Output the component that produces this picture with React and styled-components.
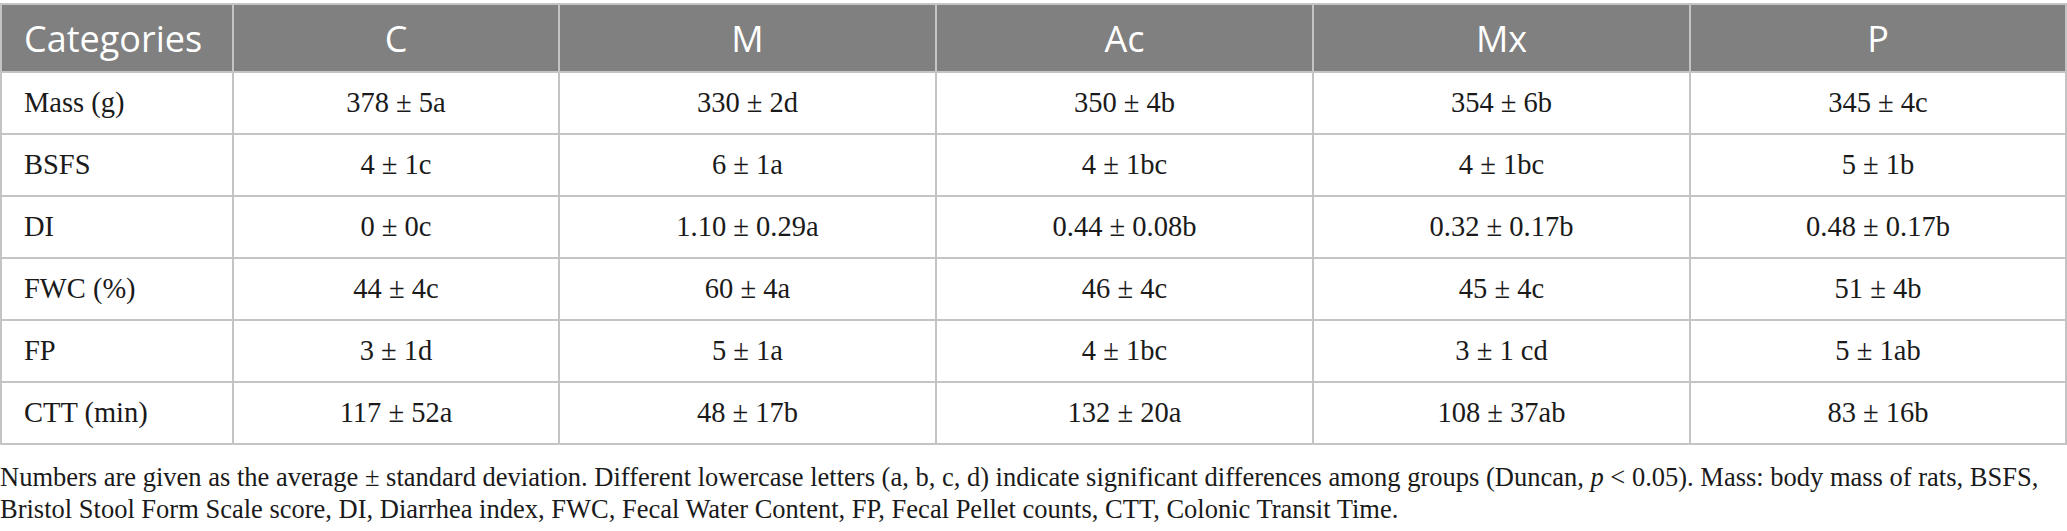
import React from 'react'
import styled, { createGlobalStyle } from 'styled-components'

const GlobalStyle = createGlobalStyle`
  html, body {
    margin: 0;
    padding: 0;
    background: #ffffff;
  }
`

const Wrapper = styled.div`
  width: 2067px;
  padding-top: 3px;
  color: #1a1a1a;
  font-family: "Liberation Serif", "Times New Roman", serif;
`

const Table = styled.table`
  width: 100%;
  border-collapse: collapse;
  table-layout: fixed;
  border: 2px solid #c4c4c4;
`

const Col = styled.col`
  width: ${props => (props.w ? `${props.w}px` : 'auto')};
`

const HeadCell = styled.th`
  height: 66px;
  padding: 0 ${props => (props.first ? '22px' : '0')};
  background: #808080;
  color: #ffffff;
  font-family: "Open Sans", "Noto Sans", sans-serif;
  font-weight: 400;
  font-size: 36px;
  text-align: ${props => (props.first ? 'left' : 'center')};
  border: 2px solid #c4c4c4;
  border-top: 0;
  border-bottom: 0;
`

const Cell = styled.td`
  height: 60px;
  padding: 0 ${props => (props.first ? '22px' : '0')};
  font-size: 28.5px;
  text-align: ${props => (props.first ? 'left' : 'center')};
  border: 2px solid #c4c4c4;
`

const Note = styled.p`
  margin: 16px 0 0;
  font-size: 26.5px;
  line-height: 32px;
`

const Italic = styled.i`
  font-style: italic;
`

const widths = [232, 326, 377, 377, 377, 0]

const columns = ['C', 'M', 'Ac', 'Mx', 'P']

const rows = [
  ['Mass (g)', '378 ± 5a', '330 ± 2d', '350 ± 4b', '354 ± 6b', '345 ± 4c'],
  ['BSFS', '4 ± 1c', '6 ± 1a', '4 ± 1bc', '4 ± 1bc', '5 ± 1b'],
  ['DI', '0 ± 0c', '1.10 ± 0.29a', '0.44 ± 0.08b', '0.32 ± 0.17b', '0.48 ± 0.17b'],
  ['FWC (%)', '44 ± 4c', '60 ± 4a', '46 ± 4c', '45 ± 4c', '51 ± 4b'],
  ['FP', '3 ± 1d', '5 ± 1a', '4 ± 1bc', '3 ± 1 cd', '5 ± 1ab'],
  ['CTT (min)', '117 ± 52a', '48 ± 17b', '132 ± 20a', '108 ± 37ab', '83 ± 16b'],
]

export default function App() {
  return (
    <Wrapper>
      <GlobalStyle />
      <Table>
        <colgroup>
          {widths.map((w, i) => (
            <Col key={i} w={w} />
          ))}
        </colgroup>
        <thead>
          <tr>
            <HeadCell first>Categories</HeadCell>
            {columns.map(c => (
              <HeadCell key={c}>{c}</HeadCell>
            ))}
          </tr>
        </thead>
        <tbody>
          {rows.map(row => (
            <tr key={row[0]}>
              {row.map((v, i) => (
                <Cell key={i} first={i === 0}>{v}</Cell>
              ))}
            </tr>
          ))}
        </tbody>
      </Table>
      <Note>
        Numbers are given as the average ± standard deviation. Different lowercase letters (a, b, c, d) indicate
        significant differences among groups (Duncan, <Italic>p</Italic> &lt; 0.05). Mass: body mass of rats, BSFS,
        Bristol Stool Form Scale score, DI, Diarrhea index, FWC, Fecal Water Content, FP, Fecal Pellet counts, CTT,
        Colonic Transit Time.
      </Note>
    </Wrapper>
  )
}
